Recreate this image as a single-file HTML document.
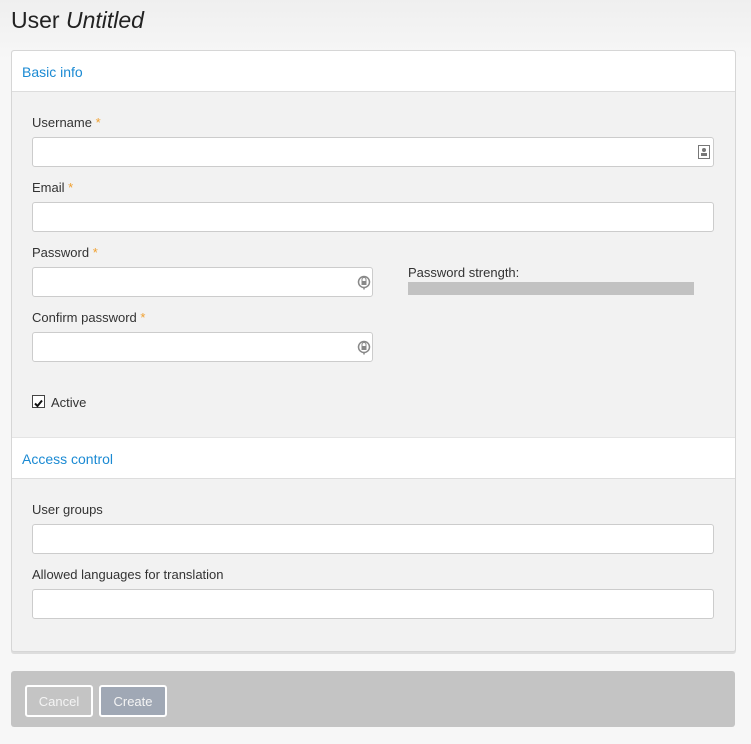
<!DOCTYPE html>
<html><head><meta charset="utf-8"><style>
body{margin:0;width:751px;height:744px;background:linear-gradient(#efefef,#f7f7f7 60px);font-family:"Liberation Sans",sans-serif;color:#333;position:relative;overflow:hidden}
.a{position:absolute}
h1{position:absolute;left:11px;top:7px;margin:0;font-weight:normal;font-size:23px;color:#222}
.panel{left:11px;top:50px;width:723px;height:600px;background:#f2f2f2;border:1px solid #d6d6d6;border-radius:3px;box-shadow:0 2px 0 #ddd}
.hd{left:12px;width:723px;height:40px;background:#fff;border-bottom:1px solid #ddd;color:#1b8ad3;font-size:14px;line-height:43px;text-indent:10px}
.lb{left:32px;font-size:13px;color:#333}
.lb b{color:#f0a030;font-weight:normal}
.in{left:32px;height:28px;background:#fff;border:1px solid #ccc;border-radius:3px}
.bar{left:11px;top:671px;width:724px;height:56px;background:#c4c4c4;border-radius:3px}
.btn{top:685px;height:28px;border:2px solid #fff;border-radius:3px;color:#f4f4f4;font-size:13px;line-height:30px;text-align:center}
</style></head><body>
<h1>User <i>Untitled</i></h1>
<div class="a panel"></div>
<div class="a hd" style="top:51px;border-radius:3px 3px 0 0">Basic info</div>
<div class="a lb" style="top:115px">Username <b>*</b></div>
<div class="a in" style="top:137px;width:680px"><svg class="a" style="left:665px;top:7px" width="12" height="14"><rect x="0.5" y="0.5" width="11" height="13" fill="#fff" stroke="#777"/><circle cx="6" cy="5" r="2" fill="#777"/><rect x="3" y="8" width="6" height="3" fill="#777"/></svg></div>
<div class="a lb" style="top:180px">Email <b>*</b></div>
<div class="a in" style="top:202px;width:680px"></div>
<div class="a lb" style="top:245px">Password <b>*</b></div>
<div class="a in" style="top:267px;width:339px"><svg class="a" style="left:324px;top:7px" width="14" height="15"><circle cx="7" cy="7" r="5.5" fill="none" stroke="#888" stroke-width="1.5"/><rect x="4.5" y="6" width="5" height="4" fill="#888"/><path d="M5 6V4.5a2 2 0 0 1 4 0V6" fill="none" stroke="#888"/><path d="M7 12.5v2" stroke="#888" stroke-width="1.5"/></svg></div>
<div class="a" style="left:408px;top:265px;font-size:13px">Password strength:</div>
<div class="a" style="left:408px;top:282px;width:286px;height:13px;background:#c2c2c2"></div>
<div class="a lb" style="top:310px">Confirm password <b>*</b></div>
<div class="a in" style="top:332px;width:339px"><svg class="a" style="left:324px;top:7px" width="14" height="15"><circle cx="7" cy="7" r="5.5" fill="none" stroke="#888" stroke-width="1.5"/><rect x="4.5" y="6" width="5" height="4" fill="#888"/><path d="M5 6V4.5a2 2 0 0 1 4 0V6" fill="none" stroke="#888"/><path d="M7 12.5v2" stroke="#888" stroke-width="1.5"/></svg></div>
<div class="a" style="left:32px;top:395px;width:11px;height:11px;border:1px solid #444;background:#fff"><svg width="11" height="11"><path d="M2 5.5L4.5 8L9 2.5" fill="none" stroke="#111" stroke-width="2"/></svg></div>
<div class="a lb" style="left:51px;top:395px">Active</div>
<div class="a hd" style="top:437px;border-top:1px solid #e4e4e4">Access control</div>
<div class="a lb" style="top:502px">User groups</div>
<div class="a in" style="top:524px;width:680px"></div>
<div class="a lb" style="top:567px">Allowed languages for translation</div>
<div class="a in" style="top:589px;width:680px"></div>
<div class="a bar"></div>
<div class="a btn" style="left:25px;width:64px">Cancel</div>
<div class="a btn" style="left:99px;width:64px;background:#a0a8b5">Create</div>
</body></html>
